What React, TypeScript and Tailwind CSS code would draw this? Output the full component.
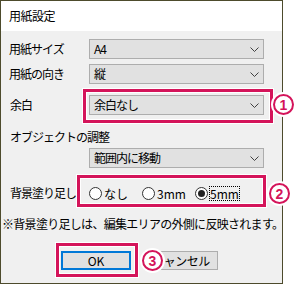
import React from "react";

function Chevron() {
  return (
    <svg width="9" height="5" viewBox="0 0 9 5" className="shrink-0">
      <polyline points="0.5,0.5 4.5,4.5 8.5,0.5" fill="none" stroke="#404040" strokeWidth="1" />
    </svg>
  );
}

function Select({ text }: { text: string }) {
  return (
    <div className="w-[175px] h-[20px] bg-[#e1e1e1] border border-[#adadad] flex items-center justify-between pl-[4px] pr-[4px]">
      <span className="leading-none">{text}</span>
      <Chevron />
    </div>
  );
}

function Radio({ label, checked, focus }: { label: string; checked?: boolean; focus?: boolean }) {
  return (
    <div className="w-[53px] flex items-center gap-[2px]">
      <div className="w-[13px] h-[13px] rounded-full border border-[#333] bg-white flex items-center justify-center shrink-0">
        {checked && <div className="w-[7px] h-[7px] rounded-full bg-[#222]" />}
      </div>
      <span className={focus ? "outline outline-1 outline-dotted outline-black leading-[13px] tracking-normal" : "leading-[13px] tracking-normal"}>
        {label}
      </span>
    </div>
  );
}

export default function App() {
  return (
    <div className="relative w-[300px] h-[284px] bg-white overflow-hidden font-['Noto_Sans_CJK_JP','Noto_Sans',sans-serif] text-[12px] text-black tracking-[-1px]">
      <div className="w-[283px] h-[284px] border border-[#4d4b2c] flex flex-col">
        <div className="h-[30px] bg-white flex items-center pl-[8px] tracking-[-0.5px]">用紙設定</div>
        <div className="flex-1 bg-[#f0f0f0] flex flex-col pl-[8px] pt-[8px]">
          <div className="flex items-center h-[20px]">
            <div className="w-[80px]">用紙サイズ</div>
            <Select text="A4" />
          </div>
          <div className="flex items-center h-[20px] mt-[5px]">
            <div className="w-[80px]">用紙の向き</div>
            <Select text="縦" />
          </div>
          <div className="flex items-center h-[20px] mt-[11px]">
            <div className="w-[80px] pl-[1px]">余白</div>
            <Select text="余白なし" />
          </div>
          <div className="h-[16px] mt-[14px] flex items-center pl-[1px]">オブジェクトの調整</div>
          <div className="flex h-[20px] mt-[3px]">
            <div className="w-[80px]" />
            <Select text="範囲内に移動" />
          </div>
          <div className="flex items-center h-[18px] mt-[16px]">
            <div className="w-[80px] pl-[1px]">背景塗り足し</div>
            <div className="flex items-center">
              <Radio label="なし" />
              <Radio label="3mm" />
              <Radio label="5mm" checked focus />
            </div>
          </div>
          <div className="h-[16px] mt-[14px] -ml-[7px] flex items-center whitespace-nowrap tracking-[-0.7px]">
            ※背景塗り足しは、編集エリアの外側に反映されます。
          </div>
          <div className="flex mt-[19px] ml-[52px] gap-[13px] tracking-normal">
            <div className="w-[70px] h-[19px] border-2 border-[#0078d7] bg-[#e1e1e1] flex items-center justify-center">OK</div>
            <div className="w-[74px] h-[19px] border border-[#adadad] bg-[#e1e1e1] flex items-center justify-center tracking-[-0.5px]">キャンセル</div>
          </div>
        </div>
      </div>

      {/* annotation overlays */}
      <div className="absolute left-[83px] top-[89px] w-[190px] h-[34px] border-[3px] border-[#d4145a] shadow-[0_0_0_1px_#fff,inset_0_0_0_1px_#fff]" />
      <div className="absolute left-[77px] top-[175px] w-[189px] h-[32px] border-[3px] border-[#d4145a] shadow-[0_0_0_1px_#fff,inset_0_0_0_1px_#fff]" />
      <div className="absolute left-[56px] top-[243px] w-[82px] h-[34px] border-[3px] border-[#d4145a] shadow-[0_0_0_1px_#fff,inset_0_0_0_1px_#fff]" />

      <div className="absolute left-[273px] top-[94px] w-[21px] h-[21px] rounded-full border-[2.5px] border-[#d4145a] bg-white shadow-[0_0_0_2px_#fff] flex items-center justify-center text-[14px] font-bold text-[#d4145a] leading-none tracking-normal font-['Liberation_Sans',sans-serif]">1</div>
      <div className="absolute left-[269px] top-[183px] w-[21px] h-[21px] rounded-full border-[2.5px] border-[#d4145a] bg-white shadow-[0_0_0_2px_#fff] flex items-center justify-center text-[14px] font-bold text-[#d4145a] leading-none tracking-normal font-['Liberation_Sans',sans-serif]">2</div>
      <div className="absolute left-[142px] top-[250px] w-[21px] h-[21px] rounded-full border-[2.5px] border-[#d4145a] bg-white shadow-[0_0_0_2px_#fff] flex items-center justify-center text-[14px] font-bold text-[#d4145a] leading-none tracking-normal font-['Liberation_Sans',sans-serif]">3</div>
    </div>
  );
}
